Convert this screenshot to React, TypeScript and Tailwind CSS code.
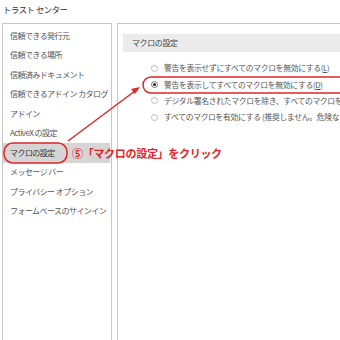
import React from "react";

const font = { fontFamily: '"Noto Sans CJK JP", "Noto Sans", sans-serif' };

const menu = [
  "信頼できる発行元",
  "信頼できる場所",
  "信頼済みドキュメント",
  "信頼できるアドイン カタログ",
  "アドイン",
  "ActiveX の設定",
  "マクロの設定",
  "メッセージ バー",
  "プライバシー オプション",
  "フォームベースのサインイン",
];

const options: { text: string; key: string; checked?: boolean }[] = [
  { text: "警告を表示せずにすべてのマクロを無効にする(", key: "L" },
  { text: "警告を表示してすべてのマクロを無効にする(", key: "D", checked: true },
  { text: "デジタル署名されたマクロを除き、すべてのマクロを無効にする", key: "" },
  { text: "すべてのマクロを有効にする (推奨しません。危険なコードが実行される可能性があります)", key: "" },
];

export default function App() {
  return (
    <div className="relative w-[340px] h-[340px] overflow-hidden bg-white" style={font}>
      <div className="h-[20px] pl-[3px] pt-[3px] text-[8.3px] leading-[12px] text-[#333] tracking-[-0.4px]">
        トラスト センター
      </div>
      <div className="flex mt-[3px] h-[320px]">
        <div className="ml-[2px] w-[110px] shrink-0 border border-[#c6c6c6] border-b-0 pt-[2px] pr-[1px]">
          {menu.map((m, i) => (
            <div
              key={m}
              className={`h-[19.5px] flex items-center pl-[7px] text-[8px] whitespace-pre tracking-[-0.55px] ${
                i === 6 ? "bg-[#d5d5d5] text-[#333]" : "text-[#555]"
              }`}
            >
              {m}
            </div>
          ))}
        </div>
        <div className="ml-[5px] flex-1 border-l border-t border-[#c6c6c6] pl-[5px] pt-[10px]">
          <div className="h-[18px] bg-[#ebebeb] flex items-center pl-[9px] text-[8px] text-[#444] tracking-[-0.4px]">
            マクロの設定
          </div>
          <div className="mt-[8px] pl-[28px] flex flex-col">
            {options.map((o) => (
              <div key={o.text} className="h-[16.3px] flex items-center whitespace-nowrap">
                <span
                  className={`w-[7px] h-[7px] rounded-full border flex items-center justify-center shrink-0 ${
                    o.checked ? "border-[#777]" : "border-[#bcbcbc]"
                  }`}
                >
                  {o.checked && <span className="w-[3px] h-[3px] rounded-full bg-[#222]" />}
                </span>
                <span className="ml-[6px] text-[7.8px] text-[#555] tracking-[-0.3px]">
                  {o.text}
                  {o.key && (
                    <>
                      <span className="underline">{o.key}</span>)
                    </>
                  )}
                </span>
              </div>
            ))}
          </div>
        </div>
      </div>

      {/* annotations */}
      <svg className="absolute left-0 top-0 pointer-events-none" width="340" height="340" viewBox="0 0 340 340">
        <rect x="4" y="143" width="63" height="20" rx="9" fill="none" stroke="#e0262b" strokeWidth="1.5" />
        <rect x="143" y="77" width="205" height="16" rx="8" fill="none" stroke="#e0262b" strokeWidth="1.5" />
        <line x1="68" y1="141" x2="135" y2="91" stroke="#e0262b" strokeWidth="1.5" />
        <polygon points="140,87 131,89 135,94" fill="#e0262b" />
      </svg>
      <div className="absolute left-[72px] top-[145px] text-[11px] leading-[16px] font-bold text-[#e0262b] whitespace-nowrap tracking-[-0.3px]">
        ⑤「マクロの設定」をクリック
      </div>
    </div>
  );
}
